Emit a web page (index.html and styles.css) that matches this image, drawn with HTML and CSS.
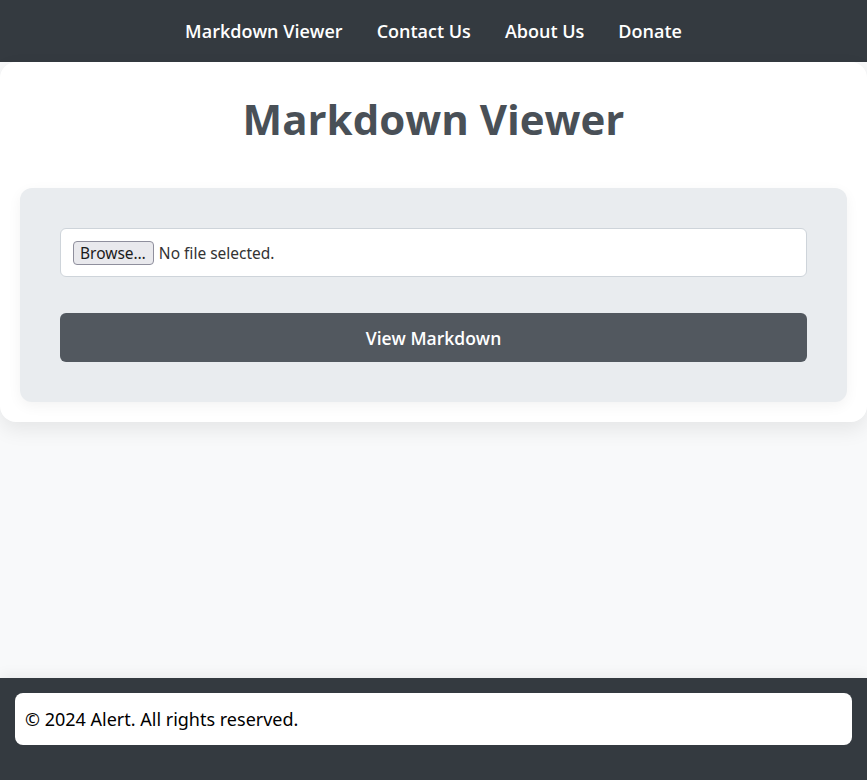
FILE: index.html
```html
<!DOCTYPE html>
<html lang="en">
<head>
    <meta charset="UTF-8">
    <meta name="viewport" content="width=device-width, initial-scale=1.0">
    <title>Markdown Viewer</title>
    <link rel="stylesheet" href="styles.css">
</head>
<body>
    <nav class="topnav">
        <a href="#">Markdown Viewer</a>
        <a href="#">Contact Us</a>
        <a href="#">About Us</a>
        <a href="#">Donate</a>
    </nav>

    <main class="page">
        <h1 class="title">Markdown Viewer</h1>
        <form class="viewer" id="viewerForm">
            <label class="file-field">
                <input type="file" id="mdFile" accept=".md">
                <span class="file-btn">Browse…</span>
                <span class="file-name">No file selected.</span>
            </label>
            <button type="submit" class="view-btn">View Markdown</button>
        </form>
    </main>

    <footer class="site-footer">
        <div class="footer-box">© 2024 Alert. All rights reserved.</div>
    </footer>
</body>
</html>
```

FILE: styles.css
```css
* {
    box-sizing: border-box;
}

body {
    margin: 0;
    min-height: 100vh;
    display: flex;
    flex-direction: column;
    background-color: #f8f9fa;
    font-family: "Open Sans", sans-serif;
}

.topnav {
    background-color: #343a40;
    height: 62px;
    display: flex;
    justify-content: center;
    align-items: center;
    gap: 34px;
}

.topnav a {
    color: #fff;
    text-decoration: none;
    font-size: 18px;
    font-weight: 600;
}

.page {
    background-color: #fff;
    border-radius: 16px;
    box-shadow: 0 8px 20px rgba(0, 0, 0, 0.08);
    padding: 20px 20px 20px;
}

.title {
    margin: 9px 0 41px;
    text-align: center;
    color: #495057;
    font-size: 42px;
    font-weight: 700;
    line-height: 56px;
}

.viewer {
    background-color: #e9ecef;
    border-radius: 12px;
    padding: 40px;
    display: flex;
    flex-direction: column;
    gap: 36px;
    box-shadow: 0 4px 14px rgba(0, 0, 0, 0.05);
}

.file-field {
    display: flex;
    align-items: center;
    height: 49px;
    background-color: #fff;
    border: 1px solid #ced4da;
    border-radius: 6px;
    padding: 0 12px;
    font-family: "Noto Sans", sans-serif;
    font-size: 15px;
    color: #333;
}

.file-field input {
    display: none;
}

.file-btn {
    background-color: #e9e9ed;
    border: 1px solid #8f8f9d;
    border-radius: 4px;
    padding: 1px 7px 1px 6px;
    color: #1b1b1b;
    font-size: 15.5px;
    margin-right: 5px;
    line-height: 20px;
}

.file-name {
    font-size: 15.5px;
}

.view-btn {
    height: 49px;
    background-color: #52585f;
    color: #fff;
    border: none;
    border-radius: 6px;
    font-family: "Open Sans", sans-serif;
    font-size: 17.5px;
    font-weight: 600;
}

.site-footer {
    margin-top: auto;
    background-color: #343a40;
    padding: 15px 15px 35px;
    box-shadow: 0 -4px 12px rgba(0, 0, 0, 0.05);
}

.footer-box {
    background-color: #fff;
    border-radius: 8px;
    padding: 14px 10px;
    font-family: "Noto Sans", sans-serif;
    font-size: 18px;
    color: #000;
}
```
